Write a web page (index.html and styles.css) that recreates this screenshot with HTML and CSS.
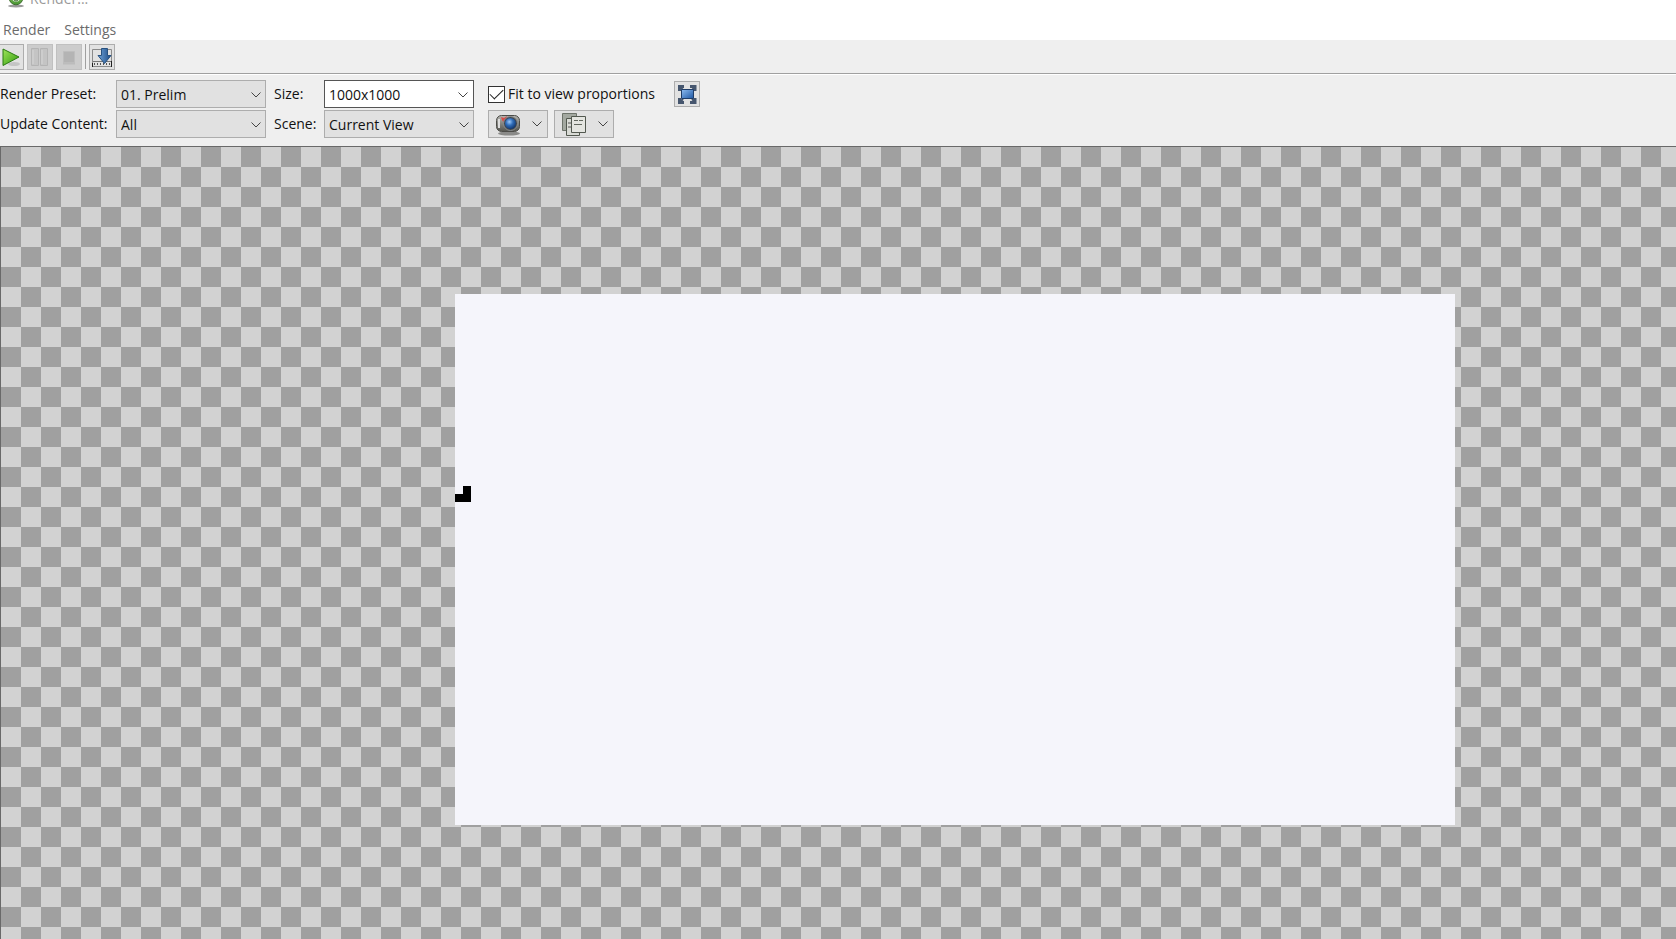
FILE: index.html
```html
<!DOCTYPE html>
<html lang="en">
<head>
<meta charset="utf-8">
<title>Render...</title>
<link rel="stylesheet" href="styles.css">
</head>
<body>
<header class="titlebar">
  <svg class="app-icon" width="18" height="16" viewBox="0 0 18 16" aria-hidden="true">
    <defs><linearGradient id="ag" x1="0" y1="0" x2="0" y2="1"><stop offset="0" stop-color="#9bd06a"/><stop offset="1" stop-color="#4f9a38"/></linearGradient></defs>
    <ellipse cx="9" cy="14" rx="8" ry="1.5" fill="#999"/>
    <circle cx="9" cy="6" r="5.3" fill="#e4eee0" stroke="url(#ag)" stroke-width="3"/>
    <circle cx="9" cy="6" r="6.8" fill="none" stroke="#3c6b2d"/>
    <path d="M6 7q3 4 6 0" fill="none" stroke="#3c6b2d"/>
  </svg>
  <span>Render...</span>
</header>
<nav class="menubar">
  <button class="menu">Render</button>
  <button class="menu">Settings</button>
</nav>
<div class="toolbar">
  <button class="tool first" aria-label="Start render">
    <svg width="24" height="24" viewBox="0 0 24 24">
      <defs><linearGradient id="pg" x1="0" y1="0" x2="1" y2="1"><stop offset="0" stop-color="#a0e45c"/><stop offset="1" stop-color="#2f9a0a"/></linearGradient></defs>
      <ellipse cx="14" cy="19" rx="6" ry="2" fill="#c4c4c4"/>
      <path d="M3 4L19 12L3 20.500z" fill="url(#pg)" stroke="#2b7a12"/>
    </svg>
  </button>
  <button class="tool" disabled aria-label="Pause">
    <svg width="24" height="24" viewBox="0 0 24 24"><path d="M3.500 3.500h7v17h-7zM12.500 3.500h7v17h-7z" fill="#c4c4c4" stroke="#b4b4b4"/><path d="M5 5v14M14 5v14" stroke="#d6d6d6"/></svg>
  </button>
  <button class="tool" disabled aria-label="Stop">
    <svg width="24" height="24" viewBox="0 0 24 24"><path d="M6.500 6.500h11v11h-11z" fill="#b4b4b4" stroke="#bebebe"/><path d="M6 18.500h12" stroke="#bcbcbc" stroke-width="2"/></svg>
  </button>
  <span class="separator"></span>
  <button class="tool" aria-label="Save image">
    <svg width="24" height="24" viewBox="0 0 24 24">
      <defs><linearGradient id="dg"><stop offset="0" stop-color="#6fa3d8"/><stop offset="1" stop-color="#1d4b86"/></linearGradient></defs>
      <path d="M2.500 4.500h19v17h-19z" fill="#e2e2e2" stroke="#8a8a8a"/>
      <path d="M3 16.500h18" stroke="#777"/>
      <path d="M4 19h17" stroke="#555" stroke-width="2" stroke-dasharray="1 2"/>
      <path d="M2.500 18v4M21.500 16v6" stroke="#222"/>
      <path d="M11.500 3.500h6v7h3.500L14.500 18.500L8 10.500h3.500z" fill="url(#dg)" stroke="#28517f"/>
    </svg>
  </button>
</div>
<form class="options">
  <label for="preset">Render Preset:</label>
  <span class="combo"><select id="preset"><option>01. Prelim</option></select><svg class="chev" viewBox="0 0 10 6"><path d="M.5 .5L5 5L9.500 .5"/></svg></span>
  <label class="mid" for="size">Size:</label>
  <span class="combo edit"><select id="size"><option>1000x1000</option></select><svg class="chev" viewBox="0 0 10 6"><path d="M.5 .5L5 5L9.500 .5"/></svg></span>
  <div class="group">
    <label class="check"><input type="checkbox" checked>Fit to view proportions</label>
    <button type="button" class="tool fit" aria-label="Fit in window">
      <svg width="24" height="24" viewBox="0 0 24 24">
        <defs><linearGradient id="fg" x1="0" y1="0" x2="1" y2="1"><stop offset="0" stop-color="#8ebcf0"/><stop offset="1" stop-color="#1c56a4"/></linearGradient></defs>
        <path d="M4.500 9V4.500H9M15 4.500h5V9M20 16v4.500h-5M9 20.500H4.500V16" fill="none" stroke="#46566e" stroke-width="3"/>
        <path d="M5 5l3 3M20 5l-3 3M5 20l3-3M20 20l-3-3" stroke="#46566e" stroke-width="2"/>
        <path d="M6.500 7.500h12v9h-12z" fill="url(#fg)" stroke="#1f3d68"/>
      </svg>
    </button>
  </div>
  <label for="content">Update Content:</label>
  <span class="combo"><select id="content"><option>All</option></select><svg class="chev" viewBox="0 0 10 6"><path d="M.5 .5L5 5L9.500 .5"/></svg></span>
  <label class="mid" for="scene">Scene:</label>
  <span class="combo"><select id="scene"><option>Current View</option></select><svg class="chev" viewBox="0 0 10 6"><path d="M.5 .5L5 5L9.500 .5"/></svg></span>
  <div class="group drops">
    <button type="button" class="drop" aria-label="Camera">
      <svg width="26" height="24" viewBox="0 0 26 24">
        <defs>
          <linearGradient id="cg" x1="0" y1="0" x2="0" y2="1"><stop offset="0" stop-color="#b5b5b0"/><stop offset="1" stop-color="#55554f"/></linearGradient>
          <radialGradient id="lg" cx=".4" cy=".35" r=".65"><stop offset="0" stop-color="#9cc8f8"/><stop offset=".5" stop-color="#2f6cb8"/><stop offset="1" stop-color="#143a72"/></radialGradient>
        </defs>
        <ellipse cx="14" cy="21.500" rx="11" ry="2" fill="#8a8a88"/>
        <rect x="1.500" y="3.500" width="23" height="16" rx="5" fill="url(#cg)" stroke="#4c4c48"/>
        <path d="M4 7v9" stroke="#ddd" stroke-width="2"/>
        <path d="M6 5l3 1 3-2-1 4-2 3-2-3z" fill="#dc4a46"/>
        <circle cx="15.500" cy="11.500" r="7" fill="#44484c" stroke="#8b8f92"/>
        <circle cx="15.500" cy="11.500" r="5.500" fill="url(#lg)"/>
      </svg>
      <svg class="arrow" viewBox="0 0 10 6"><path d="M.5 .5L5 5L9.500 .5"/></svg>
    </button>
    <button type="button" class="drop" aria-label="Layers">
      <svg width="26" height="24" viewBox="0 0 26 24">
        <path d="M1.500 1.500h14v17h-14z" fill="#a3a8a0" stroke="#6d736a"/>
        <path d="M5.500 6.500h13v17h-13z" fill="#d9dbd5" stroke="#52584f"/>
        <path d="M7 11h4M7 15h3" stroke="#555"/>
        <path d="M10.500 4.500h14v16h-14z" fill="#e4e5e0" stroke="#52584f"/>
        <path d="M13 8.500h4M18 8.500h4M13 12.500h8" stroke="#63685f"/>
      </svg>
      <svg class="arrow" viewBox="0 0 10 6"><path d="M.5 .5L5 5L9.500 .5"/></svg>
    </button>
  </div>
</form>
<main class="view">
  <div class="frame">
    <svg class="tile" width="16" height="16" viewBox="0 0 16 16"><path d="M8 0h8v16H0V8h8z"/></svg>
  </div>
</main>
</body>
</html>
```
FILE: styles.css
```css
* { box-sizing: border-box; }
body {
  margin: 0;
  min-height: 100vh;
  display: flex;
  flex-direction: column;
  background: #efefef;
  color: #111;
  font: 14px/20px "Open Sans", "Noto Sans", sans-serif;
  overflow: hidden;
}
button, select, input { font: inherit; color: inherit; margin: 0; padding: 0; }
svg { display: block; }
.titlebar {
  display: flex;
  align-items: flex-start;
  gap: 5px;
  height: 20px;
  padding-left: 7px;
  background: #fff;
  color: #999;
}
.titlebar span { margin-top: -11px; }
.app-icon { margin-top: -8px; }
.menubar { display: flex; gap: 14px; height: 20px; padding-left: 3px; background: #fff; color: #6b6b6b; }
.menu { border: 0; background: none; }
.toolbar {
  display: flex;
  align-items: flex-start;
  gap: 3px;
  height: 34px;
  padding-top: 4px;
  border-bottom: 1px solid #a0a0a0;
}
.tool { display: grid; place-items: center; width: 26px; height: 26px; border: 1px solid #adadad; background: #e2e2e2; }
.tool:disabled { background: #cccccc; border-color: #c0c0c0; }
.first { width: 24px; border-left: 0; }
.separator { width: 1px; height: 25px; background: #a0a0a0; }
.options {
  display: grid;
  grid-template-columns: 116px 150px 58px 150px 1fr;
  grid-auto-rows: 28px;
  row-gap: 2px;
  align-items: center;
  padding: 5px 0 8px;
  border-top: 1px solid #fff;
  border-bottom: 1px solid #696969;
}
.mid { padding-left: 8px; }
.combo { display: grid; position: relative; height: 28px; }
.combo select {
  appearance: none;
  width: 100%;
  height: 28px;
  padding: 1px 4px 0;
  border: 1px solid #adadad;
  border-radius: 0;
  background: #e1e1e1;
}
.edit select { background: #fff; border-color: #555; }
.chev { position: absolute; right: 5px; top: 12px; pointer-events: none; }
.edit .chev { right: 6px; }
.chev, .arrow { width: 10px; height: 6px; fill: none; stroke: #444; }
.group { display: flex; align-items: center; padding-left: 14px; }
.check { display: flex; align-items: center; gap: 3px; }
.check input {
  appearance: none;
  width: 17px;
  height: 17px;
  border: 1px solid #333;
  background: #fff;
  display: grid;
  place-items: center;
}
.check input:checked::before {
  content: "";
  width: 12px;
  height: 6px;
  border: solid #222;
  border-width: 0 0 1px 1px;
  rotate: -45deg;
  translate: 0 -2px;
}
.fit { margin-left: 19px; }
.drops { gap: 6px; }
.drop {
  display: flex;
  align-items: center;
  justify-content: space-between;
  width: 60px;
  height: 28px;
  padding: 0 5px 0 6px;
  border: 1px solid #adadad;
  background: #e1e1e1;
}
.view {
  flex: 1;
  padding: 147px 0 0 454px;
  border-left: 1px solid #696969;
  background: repeating-conic-gradient(#d2d2d2 0 25%, #a0a0a0 0 50%) 0 0 / 40px 40px;
}
.frame { width: 1000px; height: 531px; padding-top: 192px; background: #f5f5fb; }
```
